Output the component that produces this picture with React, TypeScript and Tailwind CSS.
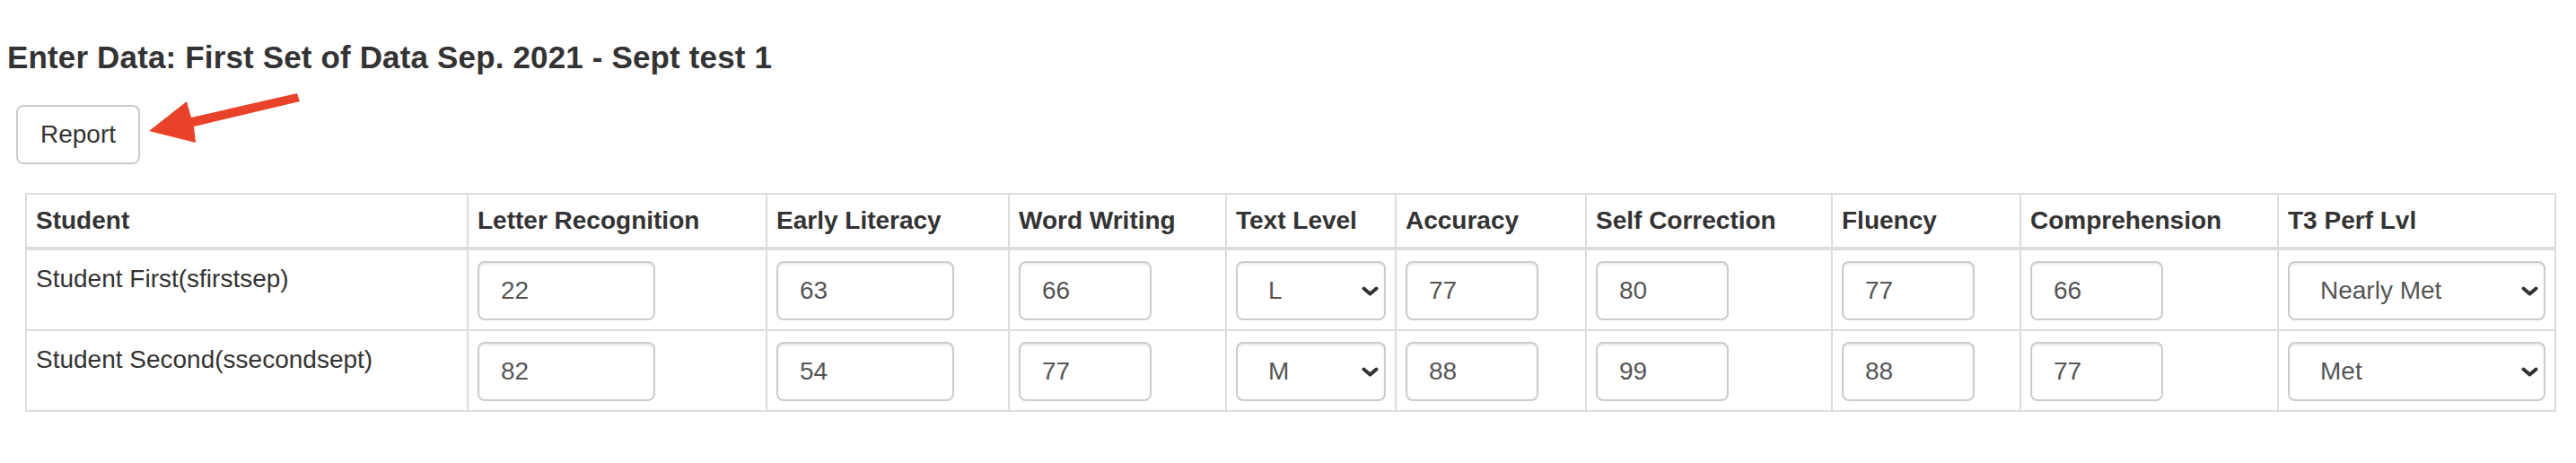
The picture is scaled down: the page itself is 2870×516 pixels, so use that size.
import { useState } from 'react'

interface StudentRow {
  name: string
  letter: string
  early: string
  word: string
  level: string
  accuracy: string
  selfCorrection: string
  fluency: string
  comprehension: string
  perf: string
}

const rows: StudentRow[] = [
  {
    name: 'Student First(sfirstsep)',
    letter: '22',
    early: '63',
    word: '66',
    level: 'L',
    accuracy: '77',
    selfCorrection: '80',
    fluency: '77',
    comprehension: '66',
    perf: 'Nearly Met',
  },
  {
    name: 'Student Second(ssecondsept)',
    letter: '82',
    early: '54',
    word: '77',
    level: 'M',
    accuracy: '88',
    selfCorrection: '99',
    fluency: '88',
    comprehension: '77',
    perf: 'Met',
  },
]

const levels = ['J', 'K', 'L', 'M', 'N', 'O']
const perfLevels = ['Not Met', 'Nearly Met', 'Met', 'Exceeded']

function ScoreInput({ value, wide = false }: { value: string; wide?: boolean }) {
  const [val, setVal] = useState(value)
  return (
    <input
      type="text"
      value={val}
      onChange={(e) => setVal(e.target.value)}
      className={`${wide ? 'w-[198px]' : 'w-[148px]'} h-[66px] block border-2 border-[#ccc] rounded-[8px] bg-white px-[24px] text-[28px] text-[#555] shadow-[inset_0_2px_2px_rgba(0,0,0,0.075)] outline-none`}
    />
  )
}

function Select({ value, options }: { value: string; options: string[] }) {
  const [val, setVal] = useState(value)
  return (
    <div className="relative w-full">
      <select
        value={val}
        onChange={(e) => setVal(e.target.value)}
        className="appearance-none block w-full h-[66px] border-2 border-[#ccc] rounded-[8px] bg-white pl-[34px] pr-[40px] text-[28px] text-[#555] shadow-[inset_0_2px_2px_rgba(0,0,0,0.075)] outline-none"
      >
        {options.map((o) => (
          <option key={o} value={o}>
            {o}
          </option>
        ))}
      </select>
      {/* chevron */}
      <svg
        className="pointer-events-none absolute right-[8px] top-[28px]"
        width="19"
        height="11"
        viewBox="0 0 19 11"
        fill="none"
      >
        <path d="M2.5 2.5 L9.5 8.5 L16.5 2.5" stroke="#333" strokeWidth="4" strokeLinecap="round" strokeLinejoin="round" />
      </svg>
    </div>
  )
}

const headers = [
  'Student',
  'Letter Recognition',
  'Early Literacy',
  'Word Writing',
  'Text Level',
  'Accuracy',
  'Self Correction',
  'Fluency',
  'Comprehension',
  'T3 Perf Lvl',
]

export default function App() {
  const th = 'border-r-2 border-b-4 border-[#ddd] px-[10px] py-[10px] text-left font-bold leading-[38px] whitespace-nowrap'
  const td = 'border-r-2 border-b-2 border-[#ddd] px-[10px] pt-[12px] pb-[10px] align-top'

  return (
    <div className="relative min-h-[516px] bg-white font-['Liberation_Sans',Arial,sans-serif] text-[#333]">
      <h4 className="pl-[8px] pt-[45px] text-[35px] font-bold leading-[38px] tracking-[0.15px]">
        Enter Data: First Set of Data Sep. 2021 - Sept test 1
      </h4>

      <div className="pl-[18px] mt-[34px]">
        <button className="w-[138px] h-[66px] border-2 border-[#ccc] rounded-[8px] bg-white text-[28px] text-[#333]">
          Report
        </button>
      </div>

      <div className="pl-[28px] mt-[32px]">
        <table className="table-fixed border-separate border-spacing-0 border-l-2 border-t-2 border-[#ddd] w-[2820px] text-[28px]">
          <colgroup>
            <col className="w-[492px]" />
            <col className="w-[333px]" />
            <col className="w-[270px]" />
            <col className="w-[242px]" />
            <col className="w-[189px]" />
            <col className="w-[212px]" />
            <col className="w-[274px]" />
            <col className="w-[210px]" />
            <col className="w-[287px]" />
            <col className="w-[309px]" />
          </colgroup>
          <thead>
            <tr>
              {headers.map((h) => (
                <th key={h} className={th}>
                  {h}
                </th>
              ))}
            </tr>
          </thead>
          <tbody>
            {rows.map((r) => (
              <tr key={r.name}>
                <td className={`${td} leading-[40px] whitespace-nowrap`}>{r.name}</td>
                <td className={td}>
                  <ScoreInput value={r.letter} wide />
                </td>
                <td className={td}>
                  <ScoreInput value={r.early} wide />
                </td>
                <td className={td}>
                  <ScoreInput value={r.word} />
                </td>
                <td className={td}>
                  <Select value={r.level} options={levels} />
                </td>
                <td className={td}>
                  <ScoreInput value={r.accuracy} />
                </td>
                <td className={td}>
                  <ScoreInput value={r.selfCorrection} />
                </td>
                <td className={td}>
                  <ScoreInput value={r.fluency} />
                </td>
                <td className={td}>
                  <ScoreInput value={r.comprehension} />
                </td>
                <td className={td}>
                  <Select value={r.perf} options={perfLevels} />
                </td>
              </tr>
            ))}
          </tbody>
        </table>
      </div>

      {/* Annotation arrow pointing at the Report button */}
      <svg className="pointer-events-none absolute left-0 top-0" width="360" height="200" viewBox="0 0 360 200">
        <polygon
          points="331,104 334,113 216,141 218,159 166,146 208,113 213,131"
          fill="#e84328"
        />
      </svg>
    </div>
  )
}
